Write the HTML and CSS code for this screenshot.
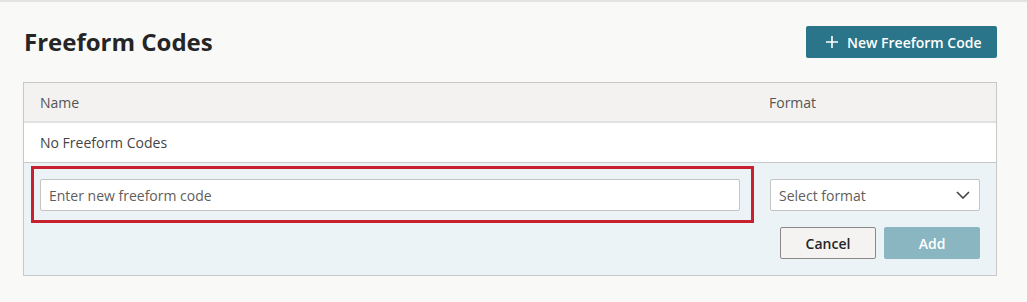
FILE: index.html
```html
<!DOCTYPE html>
<html lang="en">
<head>
<meta charset="utf-8">
<title>Freeform Codes</title>
<link rel="stylesheet" href="styles.css">
</head>
<body>
<div class="page">
  <header class="page-header">
    <h1 class="title">Freeform Codes</h1>
    <button class="btn-primary" type="button">
      <svg class="plus" viewBox="0 0 12 12" width="12" height="12" aria-hidden="true"><path d="M6 0v12M0 6h12" stroke="#fff" stroke-width="1.6" fill="none"/></svg>
      <span>New Freeform Code</span>
    </button>
  </header>

  <div class="table">
    <div class="row head">
      <div class="cell">Name</div>
      <div class="cell">Format</div>
    </div>
    <div class="row body">
      <div class="cell">No Freeform Codes</div>
      <div class="cell"></div>
    </div>
    <div class="new-row">
      <div class="name-cell">
        <div class="highlight">
          <input class="text-input" type="text" placeholder="Enter new freeform code">
        </div>
      </div>
      <div class="format-cell">
        <div class="select">
          <span>Select format</span>
          <svg class="chevron" viewBox="0 0 14 8" width="14" height="8" aria-hidden="true"><path d="M1 1l6 6 6-6" stroke="#444" stroke-width="1.6" fill="none"/></svg>
        </div>
        <div class="actions">
          <button class="btn-cancel" type="button">Cancel</button>
          <button class="btn-add" type="button">Add</button>
        </div>
      </div>
    </div>
  </div>
</div>
</body>
</html>
```
FILE: styles.css
```css
* { box-sizing: border-box; }
html, body { margin: 0; padding: 0; }
body {
  background: #f9f9f8;
  border-top: 2px solid #e3e3e3;
  font-family: "Open Sans", "Noto Sans", sans-serif;
  color: #333;
  height: 302px;
  overflow: hidden;
}
.page {
  padding: 24px 30px 0 23px;
}
.page-header {
  display: flex;
  align-items: center;
  justify-content: space-between;
  height: 32px;
}
.title {
  margin: 0 0 0 1px;
  font-size: 24px;
  font-weight: 700;
  color: #252525;
  line-height: 32px;
}
.btn-primary {
  display: flex;
  align-items: center;
  gap: 9px;
  height: 32px;
  width: 191px;
  padding: 0 0 0 20px;
  border: none;
  border-radius: 2px;
  background: #2a758a;
  color: #fff;
  font-family: inherit;
  font-size: 14px;
  font-weight: 600;
}
.table {
  margin-top: 24px;
  border: 1px solid #c8c8c8;
  background: #fff;
}
.row {
  display: grid;
  grid-template-columns: 729px 1fr;
}
.row .cell {
  padding: 0 16px;
  font-size: 14px;
  display: flex;
  align-items: center;
}
.row.head {
  height: 40px;
  background: #f3f2f1;
  border-bottom: 2px solid #e1e1e1;
  color: #555;
  padding-top: 1px;
}
.row.body {
  height: 40px;
  border-bottom: 1px solid #c8c8c8;
  color: #444;
}
.new-row {
  display: grid;
  grid-template-columns: 729px 1fr;
  background: #ebf3f6;
  padding: 16px 0 16px;
}
.name-cell {
  padding: 0 13px 0 16px;
}
.highlight {
  position: relative;
}
.highlight::after {
  content: "";
  position: absolute;
  top: -13px;
  left: -9px;
  right: -14px;
  bottom: -12px;
  border: 3px solid #c8202f;
  pointer-events: none;
}
.text-input {
  display: block;
  width: 100%;
  height: 32px;
  border: 1px solid #c4c4c4;
  border-radius: 2px;
  padding: 0 8px;
  font-family: inherit;
  font-size: 14px;
  color: #333;
  background: #fff;
}
.text-input::placeholder { color: #605e5c; }
.format-cell {
  padding: 0 16px 0 17px;
}
.select {
  display: flex;
  align-items: center;
  justify-content: space-between;
  height: 32px;
  border: 1px solid #c4c4c4;
  border-radius: 2px;
  background: #fff;
  padding: 0 9px 0 8px;
  font-size: 14px;
  color: #605e5c;
}
.actions {
  display: flex;
  justify-content: flex-end;
  gap: 8px;
  margin-top: 16px;
}
.actions button {
  width: 96px;
  height: 32px;
  border-radius: 2px;
  font-family: inherit;
  font-size: 14px;
  font-weight: 600;
}
.btn-cancel {
  background: #f4f3f2;
  border: 1px solid #8a8886;
  color: #252525;
}
.btn-add {
  background: #8ab6c2;
  border: none;
  color: #fff;
}
```
